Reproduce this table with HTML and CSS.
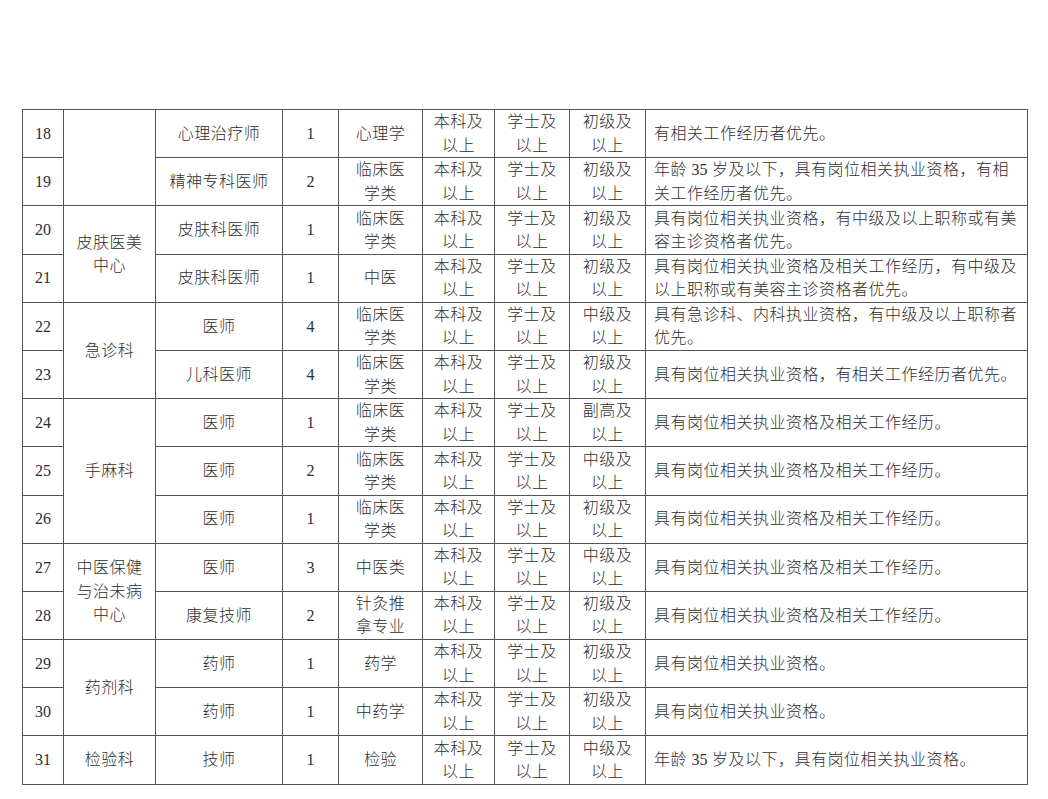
FILE: index.html
```html
<!DOCTYPE html>
<html lang="zh">
<head>
<meta charset="utf-8">
<link rel="stylesheet" href="styles.css">
</head>
<body>
<table class="grid">
<colgroup>
<col class="c-no"><col class="c-dept"><col class="c-post"><col class="c-num"><col class="c-major"><col class="c-edu"><col class="c-deg"><col class="c-title"><col class="c-note">
</colgroup>
<tbody>
<tr><td class="num">18</td><td rowspan="2"></td><td>心理治疗师</td><td class="num">1</td><td>心理学</td><td>本科及<br>以上</td><td>学士及<br>以上</td><td>初级及<br>以上</td><td class="note">有相关工作经历者优先。</td></tr>
<tr><td class="num">19</td><td>精神专科医师</td><td class="num">2</td><td>临床医<br>学类</td><td>本科及<br>以上</td><td>学士及<br>以上</td><td>初级及<br>以上</td><td class="note">年龄 <span class="lat">35</span> 岁及以下，具有岗位相关执业资格，有相<br>关工作经历者优先。</td></tr>
<tr><td class="num">20</td><td rowspan="2">皮肤医美<br>中心</td><td>皮肤科医师</td><td class="num">1</td><td>临床医<br>学类</td><td>本科及<br>以上</td><td>学士及<br>以上</td><td>初级及<br>以上</td><td class="note">具有岗位相关执业资格，有中级及以上职称或有美<br>容主诊资格者优先。</td></tr>
<tr><td class="num">21</td><td>皮肤科医师</td><td class="num">1</td><td>中医</td><td>本科及<br>以上</td><td>学士及<br>以上</td><td>初级及<br>以上</td><td class="note">具有岗位相关执业资格及相关工作经历，有中级及<br>以上职称或有美容主诊资格者优先。</td></tr>
<tr><td class="num">22</td><td rowspan="2">急诊科</td><td>医师</td><td class="num">4</td><td>临床医<br>学类</td><td>本科及<br>以上</td><td>学士及<br>以上</td><td>中级及<br>以上</td><td class="note">具有急诊科、内科执业资格，有中级及以上职称者<br>优先。</td></tr>
<tr><td class="num">23</td><td>儿科医师</td><td class="num">4</td><td>临床医<br>学类</td><td>本科及<br>以上</td><td>学士及<br>以上</td><td>初级及<br>以上</td><td class="note">具有岗位相关执业资格，有相关工作经历者优先。</td></tr>
<tr><td class="num">24</td><td rowspan="3">手麻科</td><td>医师</td><td class="num">1</td><td>临床医<br>学类</td><td>本科及<br>以上</td><td>学士及<br>以上</td><td>副高及<br>以上</td><td class="note">具有岗位相关执业资格及相关工作经历。</td></tr>
<tr><td class="num">25</td><td>医师</td><td class="num">2</td><td>临床医<br>学类</td><td>本科及<br>以上</td><td>学士及<br>以上</td><td>中级及<br>以上</td><td class="note">具有岗位相关执业资格及相关工作经历。</td></tr>
<tr><td class="num">26</td><td>医师</td><td class="num">1</td><td>临床医<br>学类</td><td>本科及<br>以上</td><td>学士及<br>以上</td><td>初级及<br>以上</td><td class="note">具有岗位相关执业资格及相关工作经历。</td></tr>
<tr><td class="num">27</td><td rowspan="2">中医保健<br>与治未病<br>中心</td><td>医师</td><td class="num">3</td><td>中医类</td><td>本科及<br>以上</td><td>学士及<br>以上</td><td>中级及<br>以上</td><td class="note">具有岗位相关执业资格及相关工作经历。</td></tr>
<tr><td class="num">28</td><td>康复技师</td><td class="num">2</td><td>针灸推<br>拿专业</td><td>本科及<br>以上</td><td>学士及<br>以上</td><td>初级及<br>以上</td><td class="note">具有岗位相关执业资格及相关工作经历。</td></tr>
<tr><td class="num">29</td><td rowspan="2">药剂科</td><td>药师</td><td class="num">1</td><td>药学</td><td>本科及<br>以上</td><td>学士及<br>以上</td><td>初级及<br>以上</td><td class="note">具有岗位相关执业资格。</td></tr>
<tr><td class="num">30</td><td>药师</td><td class="num">1</td><td>中药学</td><td>本科及<br>以上</td><td>学士及<br>以上</td><td>初级及<br>以上</td><td class="note">具有岗位相关执业资格。</td></tr>
<tr><td class="num">31</td><td>检验科</td><td>技师</td><td class="num">1</td><td>检验</td><td>本科及<br>以上</td><td>学士及<br>以上</td><td>中级及<br>以上</td><td class="note">年龄 <span class="lat">35</span> 岁及以下，具有岗位相关执业资格。</td></tr>
</tbody>
</table>
</body>
</html>
```
FILE: styles.css
```css
html, body {
  margin: 0;
  padding: 0;
  background: #ffffff;
}
body {
  padding: 109px 0 0 22px;
  font-family: "Liberation Serif", "Noto Sans CJK SC", serif;
  color: #2e2e2e;
}
.grid {
  border-collapse: collapse;
  table-layout: fixed;
  width: 1006px;
  font-size: 16px;
  line-height: 23.4px;
  letter-spacing: 0.5px;
  font-weight: 300;
}
.c-no { width: 41px; }
.c-dept { width: 92px; }
.c-post { width: 127px; }
.c-num { width: 56px; }
.c-major { width: 84px; }
.c-edu { width: 72px; }
.c-deg { width: 75px; }
.c-title { width: 76px; }
.c-note { width: 382px; }
.grid tr { height: 48.2px; }
.grid td {
  border: 1px solid #555555;
  padding: 0;
  text-align: center;
  vertical-align: middle;
  white-space: nowrap;
  overflow: hidden;
}
.grid td.num {
  font-family: "Liberation Serif", serif;
  font-size: 16px;
  letter-spacing: 0;
}
.grid td.note {
  text-align: left;
  padding-left: 8px;
}
.lat {
  font-family: "Liberation Serif", serif;
  letter-spacing: 0;
}
```
